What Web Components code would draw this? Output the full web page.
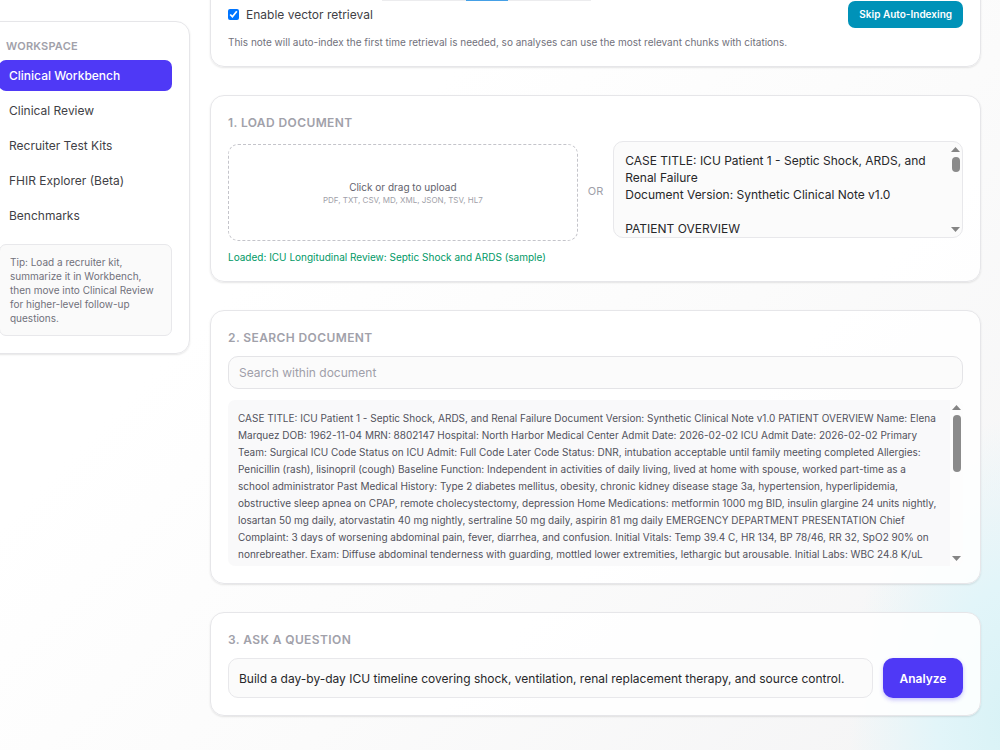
<!DOCTYPE html>
<html lang="en">
<head>
<meta charset="utf-8">
<meta name="viewport" content="width=device-width, initial-scale=1">
<title>Clinical Workbench</title>
<style>
  body {
    margin: 0;
    min-height: 100vh;
    font-family: Inter, "Liberation Sans", sans-serif;
    font-size: 12px;
    line-height: 17px;
    color: #27272a;
    background:
      radial-gradient(ellipse 160px 300px at calc(100% + 10px) 720px, #d8f2f6, #e2f5f9 45%, rgba(228, 246, 250, 0)),
      linear-gradient(135deg, #fff 30%, #fbfbfb 60%, #f4f4f5);
    overflow-x: hidden;
  }
</style>
</head>
<body>
<workbench-app></workbench-app>

<script>
const LINES = [
  'CASE TITLE: ICU Patient 1 - Septic Shock, ARDS, and Renal Failure Document Version: Synthetic Clinical Note v1.0 PATIENT OVERVIEW Name: Elena',
  'Marquez DOB: 1962-11-04 MRN: 8802147 Hospital: North Harbor Medical Center Admit Date: 2026-02-02 ICU Admit Date: 2026-02-02 Primary',
  'Team: Surgical ICU Code Status on ICU Admit: Full Code Later Code Status: DNR, intubation acceptable until family meeting completed Allergies:',
  'Penicillin (rash), lisinopril (cough) Baseline Function: Independent in activities of daily living, lived at home with spouse, worked part-time as a',
  'school administrator Past Medical History: Type 2 diabetes mellitus, obesity, chronic kidney disease stage 3a, hypertension, hyperlipidemia,',
  'obstructive sleep apnea on CPAP, remote cholecystectomy, depression Home Medications: metformin 1000 mg BID, insulin glargine 24 units nightly,',
  'losartan 50 mg daily, atorvastatin 40 mg nightly, sertraline 50 mg daily, aspirin 81 mg daily EMERGENCY DEPARTMENT PRESENTATION Chief',
  'Complaint: 3 days of worsening abdominal pain, fever, diarrhea, and confusion. Initial Vitals: Temp 39.4 C, HR 134, BP 78/46, RR 32, SpO2 90% on',
  'nonrebreather. Exam: Diffuse abdominal tenderness with guarding, mottled lower extremities, lethargic but arousable. Initial Labs: WBC 24.8 K/uL'
];

class BaseElement extends HTMLElement {
  constructor() {
    super();
    this.attachShadow({mode: 'open'});
  }

  connectedCallback() {
    this.shadowRoot.innerHTML = `
      <style>
        * { box-sizing: border-box; }
        button, input, textarea { font: inherit; }
        ${this.style_}
      </style>
      ${this.template}`;
  }
}

class PanelCard extends BaseElement {
  get style_() {
    return `
      :host {
        display: block;
        box-sizing: border-box;
        padding: 17px;
        background: rgba(255, 255, 255, 0.85);
        border: 1px solid #e6e6e9;
        border-radius: 14px;
        box-shadow: 0 1px 2px rgba(0, 0, 0, 0.1);
      }
      h2 {
        margin: 0 0 9px;
        font-size: 12px;
        line-height: 19px;
        font-weight: 600;
        letter-spacing: 0.4px;
        color: #a1a1aa;
      }`;
  }

  get template() {
    const heading = this.getAttribute('heading');
    return `${heading ? `<h2>${heading}</h2>` : ''}<slot></slot>`;
  }
}

// scroll track with arrows, thumb length comes from the attribute
class ScrollRail extends BaseElement {
  get style_() {
    return `
      :host {
        display: flex;
        flex-direction: column;
        align-items: center;
        box-sizing: border-box;
        flex: none;
        width: 13px;
        padding: 5px 0;
      }
      svg { display: block; fill: #858585; }
      i {
        width: 8px;
        height: ${this.getAttribute('thumb')}px;
        margin: 5px 0 auto;
        border-radius: 4px;
        background: #8b8b8b;
      }`;
  }

  get template() {
    return `
      <svg width="9" height="5"><path d="M0 5L4.500 0L9 5Z"/></svg>
      <i></i>
      <svg width="9" height="5"><path d="M0 0L4.500 5L9 0Z"/></svg>`;
  }
}

class WorkspaceNav extends BaseElement {
  get style_() {
    return `
      :host { display: block; }
      h2 {
        margin: 0 0 6px;
        padding-left: 7px;
        font-size: 11px;
        line-height: 15px;
        font-weight: 600;
        letter-spacing: 0.2px;
        color: #a1a1aa;
      }
      nav { display: grid; gap: 4px; }
      a {
        padding: 7px 10px;
        border-radius: 7px;
        color: #3f3f46;
        text-decoration: none;
      }
      a[aria-current] { background: #4f39f6; color: #fff; font-weight: 500; }
      p {
        margin: 13px 0 0;
        padding: 10px;
        border: 1px solid #e8e8eb;
        border-radius: 7px;
        background: #fafafa;
        font-size: 10px;
        line-height: 14px;
        color: #71717b;
      }`;
  }

  get template() {
    const items = ['Clinical Workbench', 'Clinical Review', 'Recruiter Test Kits', 'FHIR Explorer (Beta)', 'Benchmarks'];
    return `
      <h2>WORKSPACE</h2>
      <nav>
        ${items.map((item, i) => `<a href="#"${i === 0 ? ' aria-current="page"' : ''}>${item}</a>`).join('')}
      </nav>
      <p>Tip: Load a recruiter kit,<br>summarize it in Workbench,<br>then move into Clinical Review<br>for higher-level follow-up<br>questions.</p>`;
  }
}

class RetrievalSettings extends BaseElement {
  get style_() {
    return `
      :host { display: block; }
      .strip { display: flex; justify-content: center; width: 209px; height: 21px; margin-left: 154px; background: #ececee; }
      .strip span { width: 42px; background: #45a0e6; }
      .row { display: flex; align-items: center; justify-content: space-between; }
      label { display: flex; align-items: center; gap: 7px; color: #3f3f46; }
      input { width: 11px; height: 11px; margin: 0; accent-color: #0075ff; }
      button {
        height: 27px;
        padding: 0 11px;
        border: 0;
        border-radius: 7px;
        background: #0092b8;
        color: #fff;
        font-size: 10px;
        font-weight: 600;
      }
      p { margin: 7px 0 0; font-size: 10px; line-height: 14px; color: #71717b; }`;
  }

  get template() {
    return `
      <div class="strip"><span></span></div>
      <div class="row">
        <label for="vector"><input type="checkbox" id="vector" checked>Enable vector retrieval</label>
        <button type="button">Skip Auto-Indexing</button>
      </div>
      <p>This note will auto-index the first time retrieval is needed, so analyses can use the most relevant chunks with citations.</p>`;
  }
}

class LoadDocument extends BaseElement {
  get style_() {
    return `
      :host { display: block; }
      .row { display: grid; grid-template-columns: 1fr auto 1fr; align-items: center; gap: 10px; height: 100px; }
      .drop {
        display: grid;
        align-self: end;
        align-content: center;
        justify-items: center;
        height: 97px;
        border: 1px dashed #c4c4ca;
        border-radius: 10px;
        background: none;
        color: #62626c;
        font-size: 10px;
        line-height: 14px;
      }
      .drop small { font-size: 8px; line-height: 12px; color: #9f9fa9; }
      .or { font-size: 11px; color: #9f9fa9; }
      .note {
        display: flex;
        align-self: start;
        height: 97px;
        overflow: hidden;
        border: 1px solid #e8e8eb;
        border-radius: 10px;
        background: #fbfbfb;
      }
      textarea {
        flex: 1;
        min-width: 0;
        padding: 10px 0 0 11px;
        border: 0;
        background: none;
        color: #27272a;
        resize: none;
        overflow: hidden;
        white-space: pre;
      }
      p { margin: 9px 0 0; font-size: 10px; line-height: 14px; color: #009966; }`;
  }

  get template() {
    return `
      <div class="row">
        <button type="button" class="drop">Click or drag to upload<small>PDF, TXT, CSV, MD, XML, JSON, TSV, HL7</small></button>
        <span class="or">OR</span>
        <div class="note">
          <textarea aria-label="Document text">CASE TITLE: ICU Patient 1 - Septic Shock, ARDS, and
Renal Failure
Document Version: Synthetic Clinical Note v1.0

PATIENT OVERVIEW</textarea>
          <scroll-rail thumb="15"></scroll-rail>
        </div>
      </div>
      <p>Loaded: ICU Longitudinal Review: Septic Shock and ARDS (sample)</p>`;
  }
}

class SearchDocument extends BaseElement {
  get style_() {
    return `
      :host { display: block; }
      input {
        display: block;
        width: 100%;
        height: 33px;
        padding: 0 10px;
        border: 1px solid #e4e4e7;
        border-radius: 10px;
        background: #fbfbfb;
      }
      input::placeholder { color: #9f9fa9; opacity: 1; }
      .doc {
        display: flex;
        height: 166px;
        margin-top: 11px;
        overflow: hidden;
        border-radius: 7px;
        background: linear-gradient(to left, #fdfdfd 13px, #f9f9fa 13px);
      }
      .text {
        flex: 1;
        min-width: 0;
        padding: 10px 0 0 10px;
        font-size: 10px;
        line-height: 17px;
        white-space: pre;
        overflow: hidden;
        color: #52525c;
      }`;
  }

  get template() {
    return `
      <input type="search" placeholder="Search within document" aria-label="Search within document">
      <div class="doc">
        <div class="text">${LINES.join('<br>')}</div>
        <scroll-rail thumb="57"></scroll-rail>
      </div>`;
  }
}

class AskQuestion extends BaseElement {
  get style_() {
    return `
      :host { display: flex; gap: 10px; }
      input {
        flex: 1;
        min-width: 0;
        height: 40px;
        padding: 0 10px;
        border: 1px solid #e8e8eb;
        border-radius: 10px;
        background: #fbfbfb;
        color: #27272a;
      }
      button {
        width: 80px;
        height: 40px;
        border: 0;
        border-radius: 10px;
        background: #4f39f6;
        color: #fff;
        font-weight: 600;
        box-shadow: 0 2px 4px rgba(79, 57, 246, 0.3);
      }`;
  }

  get template() {
    return `
      <input type="text" aria-label="Question" value="Build a day-by-day ICU timeline covering shock, ventilation, renal replacement therapy, and source control.">
      <button type="button">Analyze</button>`;
  }
}

class WorkbenchApp extends BaseElement {
  get style_() {
    return `
      :host {
        display: grid;
        grid-template-columns: 209px 1fr;
        align-items: start;
        gap: 20px;
        margin-left: -19px;
        padding-right: 19px;
      }
      aside { margin-top: 21px; }
      main { display: grid; gap: 28px; margin-top: -38px; padding-bottom: 34px; }`;
  }

  get template() {
    return `
      <aside><panel-card><workspace-nav></workspace-nav></panel-card></aside>
      <main>
        <panel-card><retrieval-settings></retrieval-settings></panel-card>
        <panel-card heading="1. LOAD DOCUMENT"><load-document></load-document></panel-card>
        <panel-card heading="2. SEARCH DOCUMENT"><search-document></search-document></panel-card>
        <panel-card heading="3. ASK A QUESTION"><ask-question></ask-question></panel-card>
      </main>`;
  }
}

customElements.define('scroll-rail', ScrollRail);
customElements.define('panel-card', PanelCard);
customElements.define('workspace-nav', WorkspaceNav);
customElements.define('retrieval-settings', RetrievalSettings);
customElements.define('load-document', LoadDocument);
customElements.define('search-document', SearchDocument);
customElements.define('ask-question', AskQuestion);
customElements.define('workbench-app', WorkbenchApp);
</script>
</body>
</html>
